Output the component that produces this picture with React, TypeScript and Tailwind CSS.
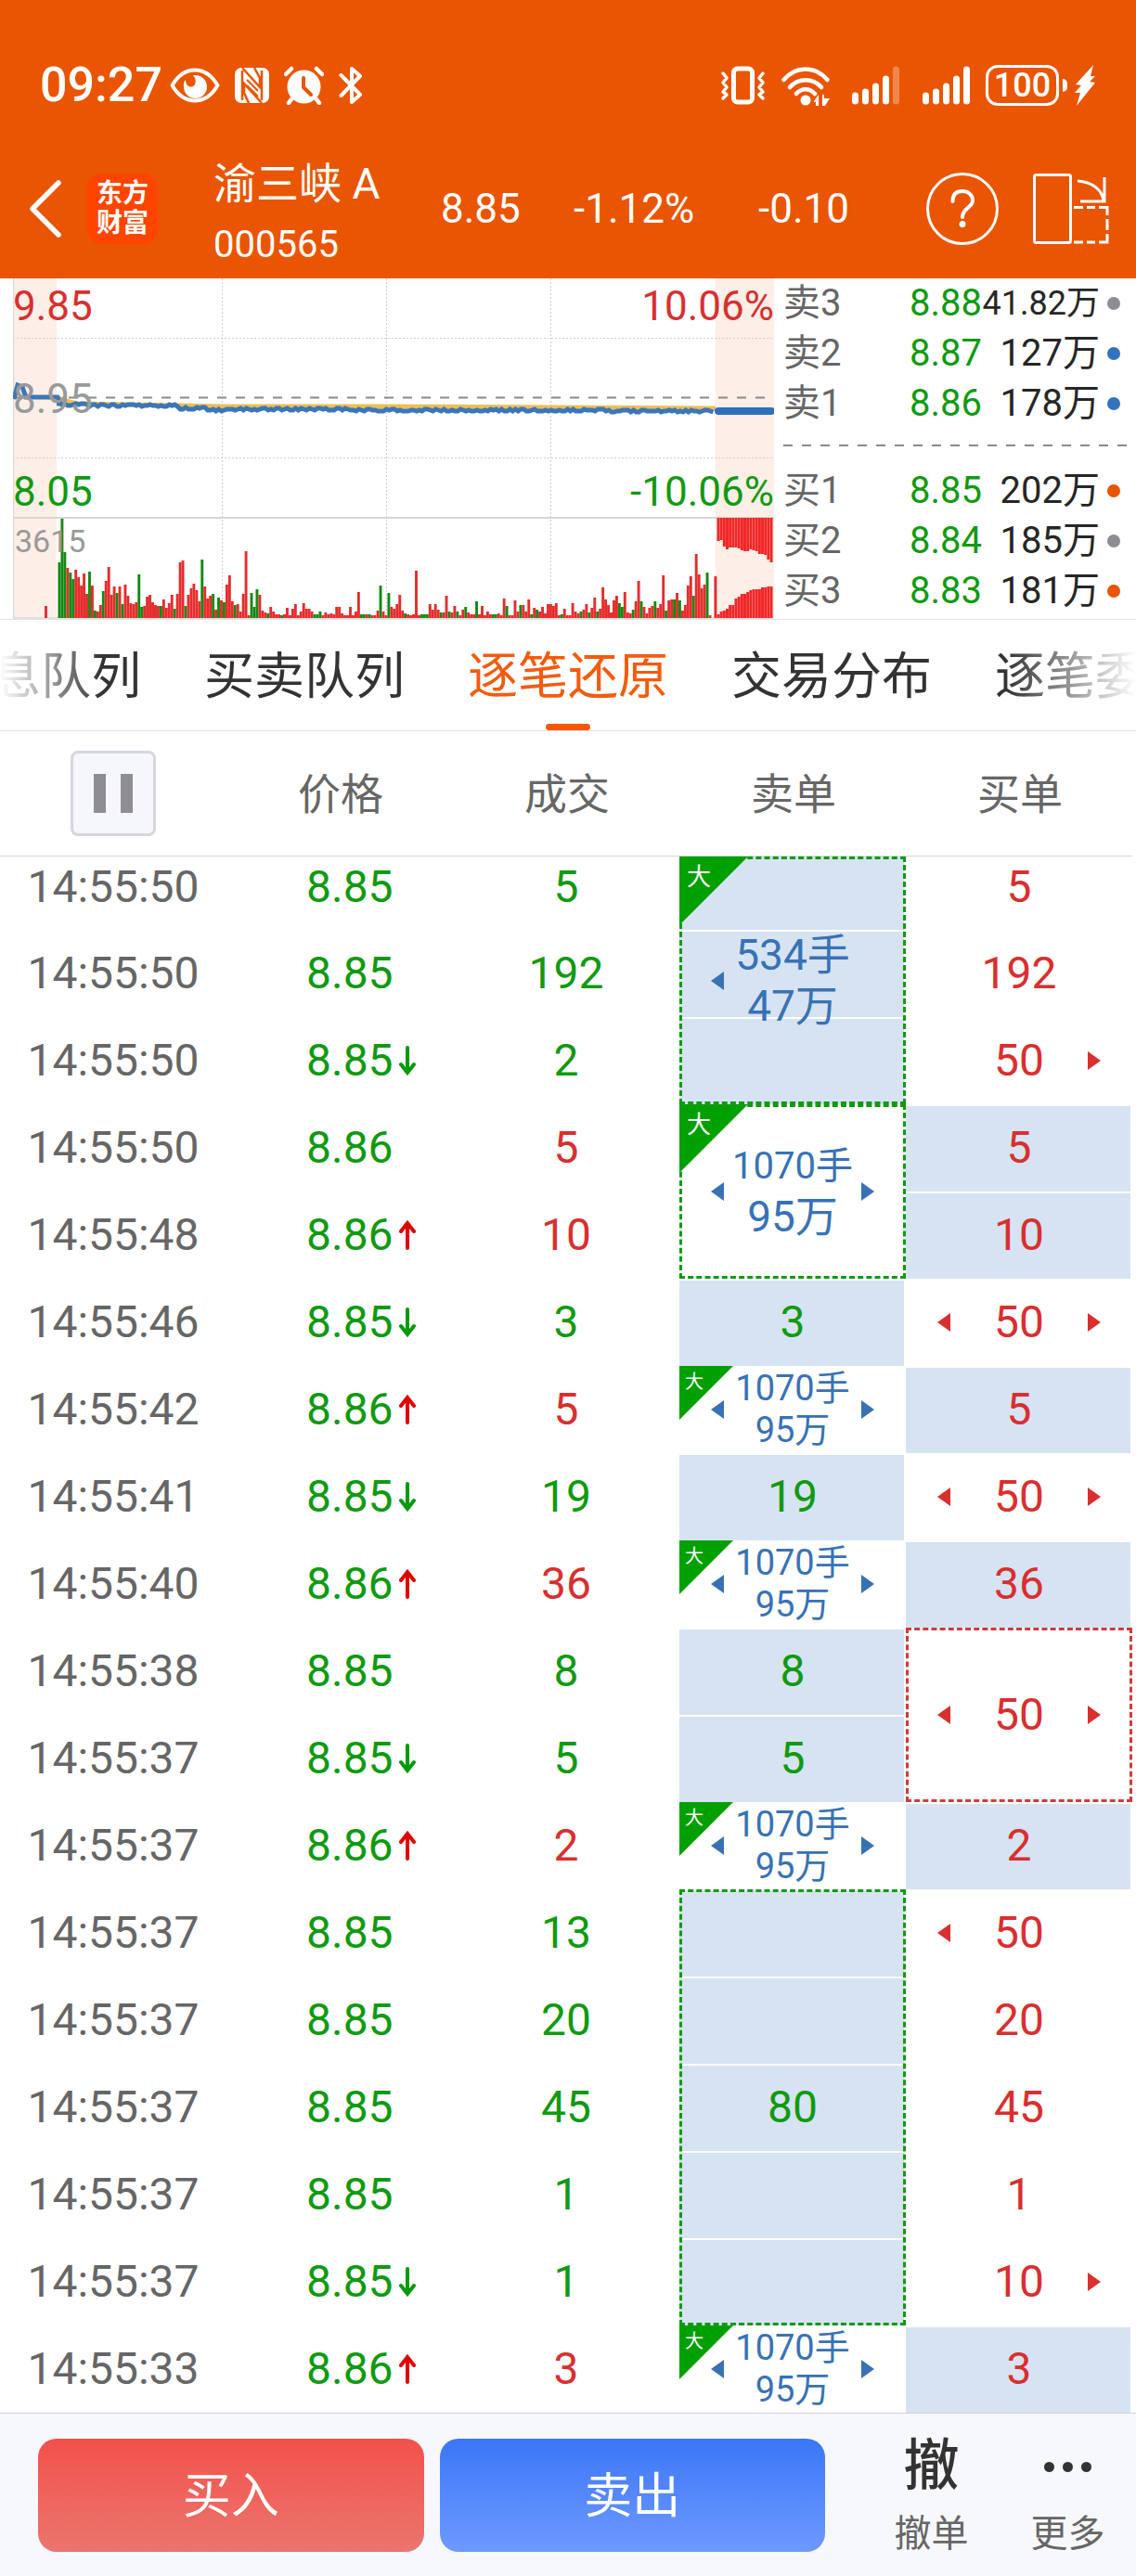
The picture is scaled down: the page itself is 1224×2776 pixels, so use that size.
import type { ReactNode } from 'react';
import clsx from 'clsx';

type Tone = 'up' | 'down';
type Arrow = 'up' | 'down';

interface OrderCell {
  span?: number;
  filled?: boolean;
  dashed?: boolean;
  big?: boolean;
  lots?: string;
  amount?: string;
  value?: string;
  prev?: boolean;
  next?: boolean;
}

interface Tick {
  time: string;
  price: string;
  arrow?: Arrow;
  volume: string;
  tone: Tone;
  sell?: OrderCell;
  buy?: OrderCell;
}

const bigOrder: OrderCell = { big: true, lots: '1070手', amount: '95万', prev: true, next: true };

const ticks: Tick[] = [
  {
    time: '14:55:50', price: '8.85', volume: '5', tone: 'down',
    sell: { span: 3, filled: true, dashed: true, big: true, lots: '534手', amount: '47万', prev: true },
    buy: { value: '5' },
  },
  { time: '14:55:50', price: '8.85', volume: '192', tone: 'down', buy: { value: '192' } },
  { time: '14:55:50', price: '8.85', arrow: 'down', volume: '2', tone: 'down', buy: { value: '50', next: true } },
  {
    time: '14:55:50', price: '8.86', volume: '5', tone: 'up',
    sell: { ...bigOrder, span: 2, dashed: true },
    buy: { value: '5', filled: true },
  },
  { time: '14:55:48', price: '8.86', arrow: 'up', volume: '10', tone: 'up', buy: { value: '10', filled: true } },
  {
    time: '14:55:46', price: '8.85', arrow: 'down', volume: '3', tone: 'down',
    sell: { value: '3', filled: true },
    buy: { value: '50', prev: true, next: true },
  },
  { time: '14:55:42', price: '8.86', arrow: 'up', volume: '5', tone: 'up', sell: bigOrder, buy: { value: '5', filled: true } },
  {
    time: '14:55:41', price: '8.85', arrow: 'down', volume: '19', tone: 'down',
    sell: { value: '19', filled: true },
    buy: { value: '50', prev: true, next: true },
  },
  { time: '14:55:40', price: '8.86', arrow: 'up', volume: '36', tone: 'up', sell: bigOrder, buy: { value: '36', filled: true } },
  {
    time: '14:55:38', price: '8.85', volume: '8', tone: 'down',
    sell: { value: '8', filled: true },
    buy: { span: 2, dashed: true, value: '50', prev: true, next: true },
  },
  { time: '14:55:37', price: '8.85', arrow: 'down', volume: '5', tone: 'down', sell: { value: '5', filled: true } },
  { time: '14:55:37', price: '8.86', arrow: 'up', volume: '2', tone: 'up', sell: bigOrder, buy: { value: '2', filled: true } },
  {
    time: '14:55:37', price: '8.85', volume: '13', tone: 'down',
    sell: { span: 5, filled: true, dashed: true, value: '80' },
    buy: { value: '50', prev: true },
  },
  { time: '14:55:37', price: '8.85', volume: '20', tone: 'down', buy: { value: '20' } },
  { time: '14:55:37', price: '8.85', volume: '45', tone: 'down', buy: { value: '45' } },
  { time: '14:55:37', price: '8.85', volume: '1', tone: 'down', buy: { value: '1' } },
  { time: '14:55:37', price: '8.85', arrow: 'down', volume: '1', tone: 'down', buy: { value: '10', next: true } },
  { time: '14:55:33', price: '8.86', arrow: 'up', volume: '3', tone: 'up', sell: bigOrder, buy: { value: '3', filled: true } },
];

const asks = [
  { label: '卖3', price: '8.88', volume: '41.82万', dot: 'bg-[#8e8d93]', small: true },
  { label: '卖2', price: '8.87', volume: '127万', dot: 'bg-[#3173c0]' },
  { label: '卖1', price: '8.86', volume: '178万', dot: 'bg-[#3173c0]' },
];

const bids = [
  { label: '买1', price: '8.85', volume: '202万', dot: 'bg-[#e95503]' },
  { label: '买2', price: '8.84', volume: '185万', dot: 'bg-[#8e8d93]' },
  { label: '买3', price: '8.83', volume: '181万', dot: 'bg-[#e95503]' },
];

// one bar per minute of continuous trading
const minuteVolumes = [
  60, 107, 71, 54, 49, 42, 52, 44, 35, 48, 26, 50, 35, 8, 7, 14, 29, 40, 55, 25, 34, 27, 34, 15, 36, 24, 16, 15, 17, 47,
  12, 13, 23, 25, 17, 14, 13, 13, 20, 11, 16, 25, 10, 26, 60, 62, 13, 25, 32, 37, 30, 18, 63, 34, 21, 24, 26, 9, 22, 19,
  17, 36, 46, 18, 14, 15, 7, 26, 72, 3, 27, 12, 31, 25, 8, 6, 5, 12, 7, 4, 4, 3, 4, 11, 3, 10, 15, 3, 7, 16,
  10, 10, 7, 4, 4, 7, 3, 6, 4, 5, 4, 12, 12, 5, 3, 3, 12, 3, 7, 28, 4, 4, 4, 4, 3, 3, 8, 35, 7, 3,
  27, 12, 10, 15, 25, 8, 5, 4, 3, 4, 51, 3, 4, 4, 4, 15, 9, 15, 9, 6, 6, 24, 7, 6, 13, 7, 3, 9, 12, 6,
  4, 4, 18, 4, 13, 3, 7, 4, 4, 4, 5, 3, 21, 13, 3, 3, 19, 7, 14, 14, 7, 20, 4, 11, 9, 7, 12, 5, 15, 15,
  13, 16, 3, 4, 10, 3, 3, 16, 7, 5, 7, 9, 15, 6, 11, 22, 7, 10, 33, 20, 14, 6, 19, 24, 16, 12, 28, 6, 5, 9,
  18, 40, 18, 12, 5, 11, 13, 18, 11, 15, 46, 8, 19, 20, 20, 27, 19, 8, 14, 35, 45, 24, 69, 47, 32, 36, 49, 3, 0, 45,
];

const fallingMinutes = new Set([
  0, 1, 2, 4, 5, 11, 13, 16, 21, 23, 29, 30, 37, 42, 46, 52, 56, 58, 60, 64, 70, 71, 72, 76, 81, 93, 94, 95, 110, 111,
  113, 117, 120, 126, 132, 133, 134, 139, 142, 145, 148, 152, 158, 159, 163, 168, 172, 174, 183, 190, 193, 196, 204,
  205, 209, 212, 217, 221, 224, 226, 231, 236,
]);

const auctionTop = [25, 24, 31, 34, 32, 32, 32, 33, 35, 36, 36, 34, 35, 36, 39, 39, 40, 45, 48];
const auctionBottom = [4, 7, 8, 10, 14, 14, 21, 23, 26, 26, 28, 30, 31, 31, 31, 33, 33, 34, 34];

const pricePoints = minuteVolumes
  .map((v, i) => {
    const base = i < 12 ? 136 : i < 45 ? 137 : i < 55 ? 140 : i < 65 ? 142 : i < 108 ? 141 : i < 200 ? 142 : 143;
    return `${47 + i * 2.96},${base - 1 + ((i * 7 + v) % 3)}`;
  })
  .join(' ');

function TrendChart() {
  return (
    <div className="relative min-w-0 flex-1 pl-[14px]">
      <svg viewBox="0 0 820 367" preserveAspectRatio="none" className="block h-[367px] w-full" aria-hidden="true">
        <rect x="0" y="0" width="47" height="366" fill="#fdeee7" />
        <rect x="757" y="0" width="63" height="366" fill="#fdeee7" />
        <g stroke="#cfcfcf" strokeWidth="1" strokeDasharray="2 2">
          <path d="M225.5 0V366M402.5 0V366M579.5 0V366M0 64.500H820M0 193.500H820" />
        </g>
        <path d="M0.500 0V366M0 366H820" stroke="#d9d9d9" strokeWidth="1.500" />
        <path d="M0 258H820" stroke="#d6d6d6" strokeWidth="2" />
        <path d="M0 128.500H820" stroke="#8a8a8a" strokeWidth="2" strokeDasharray="10 10" />
        <path d="M47 128L56 132L70 135L130 136L225 138L402 138L580 139L757 140" fill="none" stroke="#efbd52" strokeWidth="5" />
        <path d="M1 130L5 115L10 117L14 128H48L52 136" fill="none" stroke="#3b76b8" strokeWidth="5" />
        <polyline points={pricePoints} fill="none" stroke="#3b76b8" strokeWidth="5" />
        <path d="M760 143H817" stroke="#2f70bf" strokeWidth="8" strokeLinecap="round" />
        <rect x="34" y="353" width="3" height="13" fill="#d33a3a" />
        {minuteVolumes.map((v, i) => (
          <rect
            key={i}
            x={48.5 + i * 2.958}
            y={366 - v}
            width="2.9"
            height={v}
            fill={fallingMinutes.has(i) ? '#138a13' : '#e62c2c'}
          />
        ))}
        {auctionTop.map((v, i) => (
          <rect key={i} x={758.5 + i * 3.17} y="258" width="3" height={v} fill="#f02626" />
        ))}
        {auctionBottom.map((v, i) => (
          <rect key={i} x={758.5 + i * 3.17} y={366 - v} width="3" height={v} fill="#f02626" />
        ))}
      </svg>
      <span className="absolute left-[14px] top-[8px] text-[44px] leading-[44px] text-[#d92f2f]">9.85</span>
      <span className="absolute right-0 top-[8px] text-[44px] leading-[44px] text-[#d92f2f]">10.06%</span>
      <span className="absolute left-[14px] top-[108px] text-[44px] leading-[44px] text-[#999]">8.95</span>
      <span className="absolute left-[14px] top-[208px] text-[44px] leading-[44px] text-[#109a10]">8.05</span>
      <span className="absolute right-0 top-[208px] text-[44px] leading-[44px] text-[#109a10]">-10.06%</span>
      <span className="absolute left-[16px] top-[266px] text-[34px] leading-[34px] text-[#999]">3615</span>
    </div>
  );
}

function QuoteRow({ label, price, volume, dot, small }: { label: string; price: string; volume: string; dot: string; small?: boolean }) {
  return (
    <tr className="h-[54px]">
      <th scope="row" className="p-0 text-left font-normal text-[#666]">{label}</th>
      <td className="p-0 text-right text-[#109a10]">{price}</td>
      <td className={clsx('p-0 text-right text-[#262626]', small && 'text-[36px]')}>{volume}</td>
      <td className="p-0">
        <span className={clsx('ml-2 block size-[14px] rounded-full', dot)} />
      </td>
    </tr>
  );
}

function OrderBook() {
  return (
    <div className="w-[390px] shrink-0 pl-[10px]">
      <table className="w-full table-fixed border-collapse text-[40px] leading-[50px] whitespace-nowrap">
        <colgroup>
          <col />
          <col className="w-[124px]" />
          <col className="w-[127px]" />
          <col className="w-[39px]" />
        </colgroup>
        <tbody>
          {asks.map((q) => <QuoteRow key={q.label} {...q} />)}
          <tr className="h-[40px]">
            <td colSpan={4} className="p-0 pr-[9px]">
              <div className="mb-1 h-[2px] bg-[repeating-linear-gradient(90deg,#8a8a8a_0_10px,transparent_10px_20px)]" />
            </td>
          </tr>
          {bids.map((q) => <QuoteRow key={q.label} {...q} />)}
        </tbody>
      </table>
    </div>
  );
}

function StatusBar() {
  return (
    <div className="flex h-[150px] items-center pl-[43px] pr-[44px] pt-[34px] text-white">
      <span className="text-[52px] font-medium leading-none">09:27</span>
      <div className="ml-2 flex items-center gap-4">
        <svg width="54" height="38" viewBox="0 0 54 38" fill="none">
          <path d="M2.500 19C9 8 17 2.500 27 2.500S45 8 51.500 19C45 30 37 35.500 27 35.500S9 30 2.500 19Z" stroke="white" strokeWidth="4" strokeLinejoin="round" />
          <path d="M25 8C34 7 40 13 40 20A12.500 12.500 0 0 1 15 21C14.500 18 15 15 17 13C17 18 20 21 23.500 20.500C28 20 29.500 13 25 8Z" fill="white" />
        </svg>
        <svg width="37" height="40" viewBox="0 0 37 40">
          <rect x="0" y="1" width="37" height="38" rx="7" fill="white" />
          <path d="M8 1L27 22V12L21 1M29 39L10 18V28L15 39M8 4V36M29 4V36" stroke="#e95503" strokeWidth="2.500" fill="none" />
          <path d="M13 14L25 26M13 20L25 32" stroke="#e95503" strokeWidth="2" />
        </svg>
        <svg width="43" height="42" viewBox="0 0 43 42" fill="none">
          <circle cx="21.500" cy="22.500" r="18" fill="white" />
          <path d="M2 9L8 3M41 9L35 3" stroke="white" strokeWidth="4.500" strokeLinecap="round" />
          <path d="M8 36L5 40M35 36L38 40" stroke="white" strokeWidth="4.500" strokeLinecap="round" />
          <path d="M21 13V23L29 31" stroke="#e95503" strokeWidth="4" strokeLinecap="round" strokeLinejoin="round" />
        </svg>
        <svg width="26" height="42" viewBox="0 0 26 42" fill="none">
          <path d="M2.500 10L23 31L14 39V3L23 11L2.500 32" stroke="white" strokeWidth="4" strokeLinecap="round" strokeLinejoin="round" />
        </svg>
      </div>
      <div className="ml-auto flex items-center">
        <svg width="50" height="42" viewBox="0 0 50 42" fill="none" stroke="white">
          <rect x="14.500" y="3" width="20" height="36" rx="4" strokeWidth="5" />
          <path d="M3 8L7 13L3 18L7 23L3 28L7 31L3 35M46 8L42 13L46 18L42 23L46 28L42 31L46 35" strokeWidth="3.500" strokeLinecap="round" strokeLinejoin="round" />
        </svg>
        <svg className="ml-4" width="52" height="44" viewBox="0 0 52 44" fill="none" stroke="white" strokeWidth="4.500" strokeLinecap="round">
          <path d="M2.500 16C15 .5 37 .5 49.500 16M9 24C18 13.500 34 13.500 43 24M16 31C21.500 24.500 30.500 24.500 36 31" />
          <circle cx="26" cy="38" r="5.500" fill="white" stroke="none" />
          <path d="M35 39L40 32V44H37V40H35ZM52 36L47 44H44V32H46V36Z" fill="white" stroke="none" />
        </svg>
        <svg className="ml-6" width="52" height="42" viewBox="0 0 52 42" stroke="white" strokeWidth="7" strokeLinecap="round">
          <path d="M3.500 32V38M14.500 28V38M25.500 22V38M36.500 14V38" />
          <path d="M47.500 4V38" opacity="0.3" />
        </svg>
        <svg className="ml-6" width="52" height="42" viewBox="0 0 52 42" stroke="white" strokeWidth="7" strokeLinecap="round">
          <path d="M3.500 32V38M14.500 28V38M25.500 22V38M36.500 14V38M47.500 4V38" />
        </svg>
        <span className="ml-4 flex h-[44px] w-[79px] items-center justify-center rounded-[13px] border-[3px] border-white text-[36px] font-medium leading-none">
          100
        </span>
        <span className="ml-1 h-[14px] w-[5px] rounded-r-full bg-white" />
        <svg className="ml-2" width="22" height="44" viewBox="0 0 22 44" fill="white">
          <path d="M20 0L1 21L7 22L0 30L6 30L2 44L22 19L16 18L22 12L17 12Z" />
        </svg>
      </div>
    </div>
  );
}

function TitleBar() {
  return (
    <div className="flex h-[150px] items-center pl-[31px] pr-[29px] text-white">
      <button type="button" aria-label="返回" className="shrink-0">
        <svg width="35" height="62" viewBox="0 0 35 62" fill="none" stroke="white" strokeWidth="5.500" strokeLinecap="round" strokeLinejoin="round">
          <path d="M32 3L4 31L32 59" />
        </svg>
      </button>
      <div className="ml-7 flex size-[76px] shrink-0 flex-col items-center justify-center rounded-2xl bg-[#ff4400] text-[28px] font-bold leading-[32px]">
        <span>东方</span>
        <span>财富</span>
      </div>
      <div className="ml-[60px] w-[245px] shrink-0 whitespace-nowrap pt-3">
        <h1 className="text-[46px] leading-[66px]">渝三峡 A</h1>
        <p className="text-[40px] leading-[66px]">000565</p>
      </div>
      <div className="flex whitespace-nowrap text-[44px]">
        <span className="w-[143px]">8.85</span>
        <span className="w-[199px]">-1.12%</span>
        <span>-0.10</span>
      </div>
      <div className="ml-auto flex shrink-0 items-center gap-[37px]">
        <button type="button" aria-label="帮助">
          <svg width="78" height="78" viewBox="0 0 78 78" fill="none" stroke="white">
            <circle cx="39" cy="39" r="37.500" strokeWidth="3" />
            <path d="M28.500 31C28.500 23 33 20 39 20S50 24 50 30C50 38 39 38 39 48" strokeWidth="4" strokeLinecap="round" />
            <circle cx="39" cy="55.500" r="3.500" fill="white" stroke="none" />
          </svg>
        </button>
        <button type="button" aria-label="横屏">
          <svg width="82" height="76" viewBox="0 0 82 76" fill="none" stroke="white" strokeWidth="3">
            <rect x="1.500" y="1.500" width="39" height="73" rx="2" />
            <path d="M48 8C63 9 75 17 76 30M77 4V30H51" />
            <path d="M44 36.500H54M58 36.500H67M71 36.500H80V45M80 49V61M80 65V74H71M67 74H58M54 74H44" />
          </svg>
        </button>
      </div>
    </div>
  );
}

function TabBar() {
  return (
    <nav className="relative flex h-[121px] justify-center gap-[68px] overflow-hidden whitespace-nowrap border-y border-[#e3e3e3] text-[54px] text-[#333]">
      <button type="button" className="shrink-0 pt-1">息队列</button>
      <button type="button" className="shrink-0 pt-1">买卖队列</button>
      <button type="button" aria-current="page" className="relative shrink-0 pt-1 text-[#f25c0e]">
        逐笔还原
        <span className="absolute inset-x-0 bottom-0 mx-auto h-[7px] w-12 rounded-full bg-[#fb5607]" />
      </button>
      <button type="button" className="shrink-0 pt-1">交易分布</button>
      <button type="button" className="shrink-0 pt-1">逐笔委</button>
      <div className="pointer-events-none absolute inset-y-0 left-0 w-[110px] bg-linear-to-r from-white to-transparent" />
      <div className="pointer-events-none absolute inset-y-0 right-0 w-[140px] bg-linear-to-l from-white to-transparent" />
    </nav>
  );
}

function PriceArrow({ dir }: { dir: Arrow }) {
  return (
    <svg className="ml-[6px]" width="18" height="32" viewBox="0 0 18 32" fill="none" stroke={dir === 'up' ? '#e00000' : '#009a0a'} strokeWidth="4" strokeLinecap="round">
      <path d={dir === 'up' ? 'M9 30V3M2 12L9 3L16 12' : 'M9 2V29M2 20L9 29L16 20'} />
    </svg>
  );
}

function Pointer({ dir, show }: { dir: 'left' | 'right'; show?: boolean }) {
  return (
    <svg width="14" height="20" viewBox="0 0 14 20" className={clsx('shrink-0', !show && 'invisible')} fill="currentColor">
      <path d={dir === 'left' ? 'M0 10L14 0V20Z' : 'M14 10L0 0V20Z'} />
    </svg>
  );
}

function Order({ order, side, clipped }: { order: OrderCell; side: 'sell' | 'buy'; clipped: boolean }) {
  const span = order.span ?? 1;
  let content: ReactNode = order.value;
  if (order.lots) {
    const tall = span > 1;
    content = (
      <span className={clsx('flex flex-col items-center', tall ? 'text-[46px] leading-[55px]' : 'text-[38px] leading-[45px]')}>
        <span className={clsx(order.lots.length > 4 && tall && 'text-[40px]')}>{order.lots}</span>
        <span>{order.amount}</span>
      </span>
    );
  }
  return (
    <td rowSpan={span} className={clsx('relative p-0', clipped && span === 1 && 'pb-[14px]')}>
      <div className="absolute inset-y-0 left-0 right-[2px] flex flex-col justify-end overflow-hidden">
        {order.filled &&
          Array.from({ length: span }, (_, i) => (
            <div key={i} className="h-[94px] shrink-0 border-t-2 border-white bg-[#d6e3f2]" />
          ))}
      </div>
      {order.big && (
        <div
          className={clsx(
            'absolute left-0 top-0 bg-[#00a000] text-left text-white [clip-path:polygon(0_0,100%_0,0_100%)]',
            span > 1 ? 'size-[74px] pl-2 pt-2 text-[26px] leading-[28px]' : 'size-[58px] pl-[6px] pt-[6px] text-[20px] leading-[22px]',
          )}
        >
          大
        </div>
      )}
      {order.dashed && (
        <div
          className={clsx(
            'absolute inset-0 border-[3px] border-dashed',
            side === 'sell' ? 'border-[#109a10]' : 'border-[#d33a3a]',
          )}
        />
      )}
      <div
        className={clsx(
          'relative flex items-center justify-between px-[34px]',
          order.lots ? 'text-[#3872b5]' : side === 'sell' ? 'text-[#109a10]' : 'text-[#d92f2f]',
        )}
      >
        <Pointer dir="left" show={order.prev} />
        {content}
        <Pointer dir="right" show={order.next} />
      </div>
    </td>
  );
}

function TickTable() {
  return (
    <div className="pr-1">
      <table className="w-full table-fixed border-separate border-spacing-0 whitespace-nowrap text-center text-[48px] leading-[56px]">
        <thead>
          <tr className="h-[135px] text-[46px] text-[#666]">
            <th className="border-b border-[#d6d6d6] p-0">
              <button type="button" aria-label="暂停" className="mx-auto flex size-[92px] items-center justify-center gap-4 rounded-lg border-[3px] border-[#d5d6de] bg-[#f6f7fb]">
                <span className="h-[42px] w-[13px] bg-[#8e8d93]" />
                <span className="h-[42px] w-[13px] bg-[#8e8d93]" />
              </button>
            </th>
            {['价格', '成交', '卖单', '买单'].map((name) => (
              <th key={name} scope="col" className="border-b border-[#d6d6d6] p-0 pl-[2px] pt-[2px] font-normal">{name}</th>
            ))}
          </tr>
        </thead>
        <tbody>
          {ticks.map((tick, i) => {
            // the first row is partly scrolled under the header
            const clipped = i === 0;
            const pad = clipped && 'pb-[14px]';
            return (
              <tr key={i} className={clipped ? 'h-[79px]' : 'h-[94px]'}>
                <td className={clsx('p-0 text-[#666]', pad)}>{tick.time}</td>
                <td className={clsx('p-0 pl-[86px] text-[#109a10]', pad)}>
                  <span className="flex items-center">
                    {tick.price}
                    {tick.arrow && <PriceArrow dir={tick.arrow} />}
                  </span>
                </td>
                <td className={clsx('p-0', pad, tick.tone === 'up' ? 'text-[#d92f2f]' : 'text-[#109a10]')}>{tick.volume}</td>
                {tick.sell && <Order order={tick.sell} side="sell" clipped={clipped} />}
                {tick.buy && <Order order={tick.buy} side="buy" clipped={clipped} />}
              </tr>
            );
          })}
        </tbody>
      </table>
    </div>
  );
}

function TradeBar() {
  return (
    <footer className="flex border-t border-[#cfd4da] bg-[#f7f8fb] py-[27px] pl-[41px]">
      <div className="flex flex-1 gap-[17px] text-[52px] text-white">
        <button type="button" className="h-[122px] flex-1 rounded-[20px] bg-linear-to-b from-[#f2504a] to-[#eb746e] pt-1">买入</button>
        <button type="button" className="h-[122px] flex-1 rounded-[20px] bg-linear-to-b from-[#3b76f8] to-[#6d99fe] pt-1">卖出</button>
      </div>
      <div className="ml-[41px] flex text-[40px] text-[#666]">
        <button type="button" className="flex w-[147px] flex-col items-center justify-between">
          <span className="text-[60px] font-medium leading-[60px] text-[#333]" aria-hidden="true">撤</span>
          <span className="pt-1 leading-[38px]">撤单</span>
        </button>
        <button type="button" className="flex w-[147px] flex-col items-center justify-between">
          <span className="flex h-[60px] items-center gap-[9px]">
            <span className="size-[11px] rounded-full bg-[#333]" />
            <span className="size-[11px] rounded-full bg-[#333]" />
            <span className="size-[11px] rounded-full bg-[#333]" />
          </span>
          <span className="pt-1 leading-[38px]">更多</span>
        </button>
      </div>
    </footer>
  );
}

export default function App() {
  return (
    <div className="bg-white font-[Roboto,'Noto_Sans_CJK_SC',sans-serif]">
      <header className="bg-[#e95503]">
        <StatusBar />
        <TitleBar />
      </header>
      <section className="flex">
        <TrendChart />
        <OrderBook />
      </section>
      <TabBar />
      <TickTable />
      <TradeBar />
    </div>
  );
}
